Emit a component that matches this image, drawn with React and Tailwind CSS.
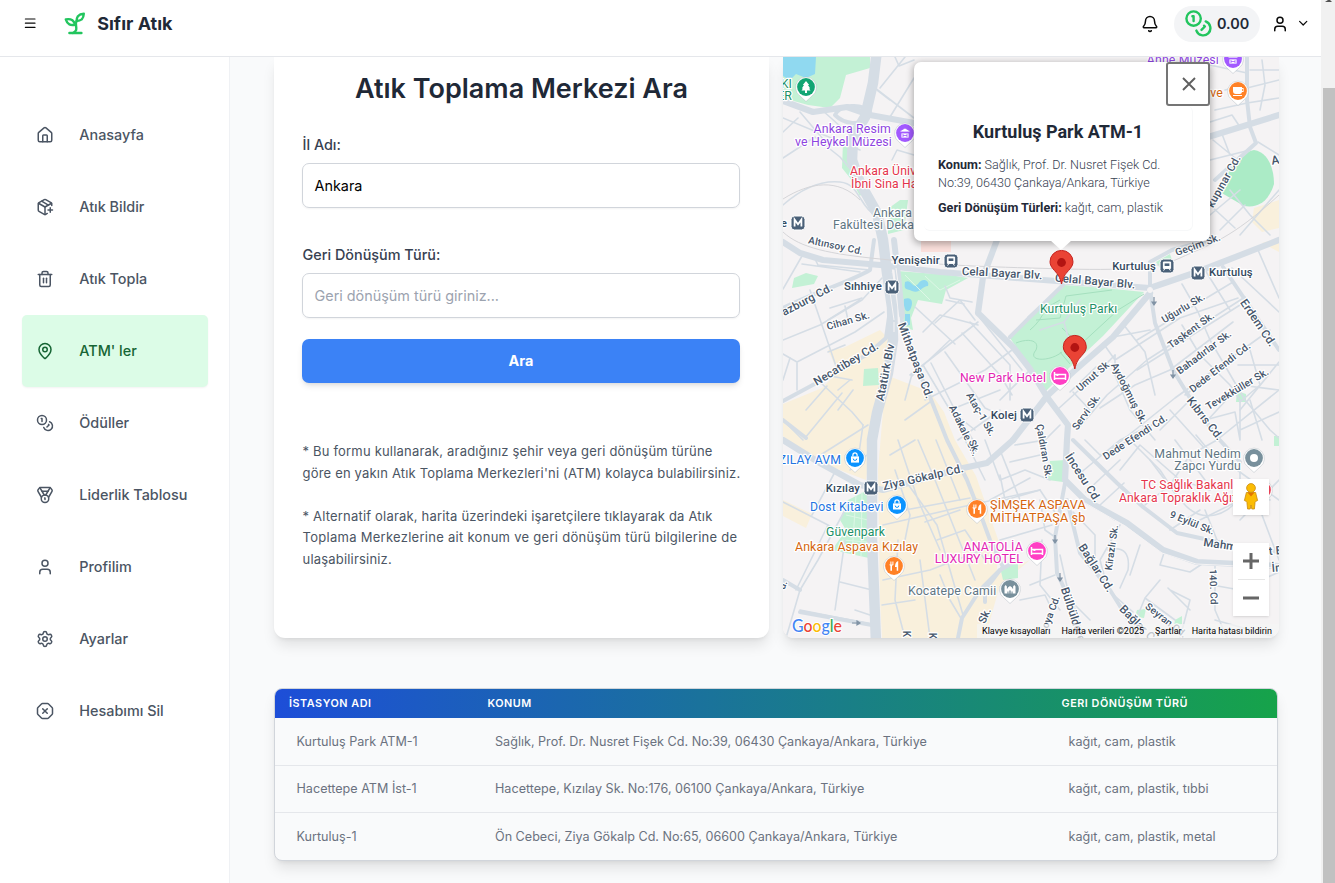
import React from "react";
import {
  Bell,
  ChevronDown,
  House,
  MapPin,
  Medal,
  Menu,
  OctagonX,
  PackagePlus,
  Settings,
  Trash2,
  User,
} from "lucide-react";

function Coins({ className }) {
  return (
    <svg viewBox="0 0 24 24" fill="none" stroke="currentColor" strokeWidth="2" strokeLinecap="round" strokeLinejoin="round" className={className}>
      <circle cx="8" cy="8" r="6" />
      <path d="M18.09 10.37A6 6 0 1 1 10.34 18" />
      <path d="M7 6h1v4" />
      <path d="m16.71 13.88.7.71-2.82 2.82" />
    </svg>
  );
}

function Sprout({ className }) {
  return (
    <svg viewBox="0 0 24 24" fill="none" stroke="currentColor" strokeWidth="2" strokeLinecap="round" strokeLinejoin="round" className={className}>
      <path d="M7 20h10" />
      <path d="M10 20c5.5-2.5.8-6.4 3-10" />
      <path d="M9.5 9.4c1.1.8 1.8 2.2 2.3 3.7-2 .4-3.5.4-4.8-.3-1.2-.6-2.3-1.9-3-4.2 2.8-.5 4.4 0 5.5.8z" />
      <path d="M14.1 6a7 7 0 0 0-1.1 4c1.9-.1 3.3-.6 4.3-1.4 1-1 1.6-2.3 1.7-4.6-2.7.1-4 1-4.9 2z" />
    </svg>
  );
}

const navItems = [
  { label: "Anasayfa", icon: House },
  { label: "Atık Bildir", icon: PackagePlus },
  { label: "Atık Topla", icon: Trash2 },
  { label: "ATM' ler", icon: MapPin, active: true },
  { label: "Ödüller", icon: Coins },
  { label: "Liderlik Tablosu", icon: Medal },
  { label: "Profilim", icon: User },
  { label: "Ayarlar", icon: Settings },
  { label: "Hesabımı Sil", icon: OctagonX },
];

const stations = [
  ["Kurtuluş Park ATM-1", "Sağlık, Prof. Dr. Nusret Fişek Cd. No:39, 06430 Çankaya/Ankara, Türkiye", "kağıt, cam, plastik"],
  ["Hacettepe ATM İst-1", "Hacettepe, Kızılay Sk. No:176, 06100 Çankaya/Ankara, Türkiye", "kağıt, cam, plastik, tıbbi"],
  ["Kurtuluş-1", "Ön Cebeci, Ziya Gökalp Cd. No:65, 06600 Çankaya/Ankara, Türkiye", "kağıt, cam, plastik, metal"],
];

const commercial = [
  "M843 348 L880 330 890 340 884 373 872 440 866 480 850 474 820 462 806 458 783 436 783 404 822 388 838 372 828 350Z",
  "M783 500 L812 514 806 528 783 516Z",
  "M886 375 L930 392 944 412 955 440 976 476 1000 545 996 575 1030 560 1000 585 985 638 882 638 880 600 878 470Z",
  "M1254 208 L1279 200 1279 228 1262 232 1252 222Z",
  "M1262 243 L1279 238 1279 252Z",
];

const parks = [
  "M783 57 L870 57 870 68 846 75 840 98 830 108 808 105 783 98Z",
  "M843 142 L850 142 851 160 864 190 860 196 850 178 842 168Z",
  "M889 208 L900 200 908 200 904 230 888 234Z",
  "M794 278 L806 273 818 276 814 284 792 288Z",
  "M897 271 L950 275 968 278 946 290 942 304 918 300 911 318 913 330 905 328 900 300Z",
  "M864 369 L878 368 879 385 863 386Z",
  "M1010 338 L1064 285 1104 288 1144 292 1103 336 1070 367 1046 391Z",
  "M848 500 L868 490 869 558 832 550 846 530 840 520Z",
  "M1050 461 L1066 460 1063 482 1048 480Z",
  "M1000 567 L1018 563 1018 578 1003 580Z",
  "M1237 391 L1246 394 1246 402 1236 402Z",
  "M1156 262 L1170 254 1174 266 1160 268Z",
  "M1137 610 L1146 609 1144 618 1135 617Z",
  "M1175 620 L1182 616 1182 624 1174 626Z",
  "M1274 436 L1279 436 1279 446 1274 446Z",
];

const water = [
  "M783 57 L816 57 815 74 806 78 796 74 790 80 783 76Z",
  "M905 282 C912 278 912 290 918 284 C922 277 930 280 928 286 C922 286 920 294 912 291 C905 288 904 290 905 282Z",
  "M904 299 C912 296 914 302 910 310 C906 314 903 308 904 299Z",
  "M905 314 L910 314 910 325 905 326Z",
];

const minorRoads = [
  "M783 132 L798 118 M783 158 L815 137 840 157 851 170 M783 205 C800 190 820 180 840 182 S858 205 876 216",
  "M875 88 L914 118 M880 88 L905 57 M890 117 L914 78 M892 160 L897 150 914 155 M877 90 L890 100",
  "M783 289 L802 256 M802 264 L860 272 M814 257 L818 265 870 270",
  "M783 340 L820 325 862 300 882 278 M783 354 L797 362 855 332 884 312 M810 290 L838 372 M797 362 L797 390",
  "M783 380 L790 358 M828 352 L845 345 M820 382 L852 412 863 425 M827 386 L806 410 M830 376 L852 380 M805 438 L842 393 M822 454 L868 425 M850 470 L867 455",
  "M828 320 L860 300 M830 308 L862 298 M845 306 L848 320 M783 420 L803 440 M863 425 L858 460 M838 390 L850 380 M853 390 L838 410",
  "M915 307 L955 344 M935 323 L960 300 975 320 M923 332 L940 315 978 325 M946 300 L964 304 M945 286 L950 298 972 302",
  "M910 375 L978 322 M905 400 L912 374 M912 376 L950 340 M923 365 L950 410 975 430 M931 363 L960 420 973 440 M945 352 L985 408 1000 415",
  "M962 333 L1000 375 1012 395 M970 322 L1010 365 1010 400 M980 318 L1022 370 M1000 400 L1030 370 M925 400 L985 370 1012 350 M905 420 L930 402 M950 410 L1000 390 M958 440 L1000 410",
  "M918 440 L935 480 975 580 M905 480 L937 525 963 615 M936 440 L960 500 M965 440 L985 480 M898 440 L918 500 940 550 M883 525 L970 505 1040 490 M883 580 L930 570 995 545",
  "M915 440 L890 455 M898 540 L895 600 905 638 M920 560 L930 638 M937 540 L965 530 985 560 M940 575 L950 600 962 620 M882 605 L915 600 M905 510 L970 498 M925 522 L960 510 M895 470 L910 515 905 540",
  "M783 502 L828 525 842 535 M845 510 L818 560 800 590 786 638 M828 525 L796 590 M812 515 L836 470 M800 590 L783 580 M800 610 L876 625 M845 540 L835 610 M840 582 L872 590 M855 610 L870 615",
  "M1028 317 L1064 285 M1080 300 L1064 322 1070 345 M1064 322 L1040 330",
  "M1113 337 L1150 330 M1123 324 L1145 352 1155 395 M1103 343 L1115 360 M1137 340 L1233 282 M1115 360 L1180 318 1238 298 M1137 370 L1240 305 M1096 367 L1070 392 M1073 392 L1090 410 M1115 355 L1115 375 1130 410 1155 440",
  "M1057 410 L1090 380 1115 355 M1077 430 L1107 395 1147 360 1245 297 M1100 408 L1135 385 1170 370 1233 322 M1110 450 L1175 398 1270 330 M1185 395 L1235 357 M1182 325 L1200 355 1230 385 1240 400",
  "M1182 284 L1198 312 1210 340 1245 400 1270 430 1279 438 M1232 268 L1279 312 M1258 250 L1279 298 M1205 270 L1230 310 M1250 350 L1260 385 1240 402 M1279 362 L1240 410 M1238 365 L1279 365 M1205 423 L1240 385 1279 390",
  "M1205 420 L1235 412 1240 440 M1240 400 L1240 440 M1217 440 L1279 390 M1250 400 L1262 440 M1279 412 L1240 430 M1170 410 L1215 460 M1190 400 L1160 430",
  "M1085 440 L1100 455 1130 440 M1078 475 L1120 440 1152 425 M1086 492 L1120 460 M1100 505 L1124 483 M1120 470 L1140 445 1180 480 1210 490 M1130 440 L1160 470 C1180 500 1190 520 1215 515 S1240 480 1270 500",
  "M1145 505 L1170 485 1190 455 1217 440 M1150 460 L1180 500 M1175 440 L1205 480 M1220 440 L1240 470 1240 500 M1200 520 L1240 500 M1217 540 L1205 510 M1170 530 L1200 510",
  "M1120 525 L1100 560 1108 590 1133 612 M1140 545 L1130 575 M1108 550 C1125 545 1130 555 1128 570 L1120 588 M1165 550 L1160 565 1190 572 M1215 565 L1215 610 1227 638 M1190 572 L1205 562 M1212 585 L1240 590",
  "M1040 500 L1045 530 1055 537 M1040 490 L1060 520 M1000 540 L1052 525 M1030 585 L1055 575 M1020 600 L1045 595 1052 610 M1042 540 L1040 585 1060 610",
  "M1073 512 L1095 535 1095 560 M1060 555 L1070 600 1090 620 M1085 500 L1115 520 M1133 627 L1145 598 1175 620 M1168 588 L1190 610 M1145 598 L1160 580 M1215 620 L1279 638 M1170 590 L1190 600 1180 638",
  "M1210 65 L1247 73 M1215 110 L1247 103 1279 98 M1247 88 L1279 80 M1210 122 L1232 115 1240 127 M1225 90 L1247 85 M1262 60 L1265 85 1260 110 M1250 70 L1279 70",
  "M1210 160 L1250 150 M1213 140 L1240 162 M1222 134 L1230 155 M1258 142 L1279 155 M1230 190 L1250 215 1270 235 M1210 215 L1240 190 M1220 230 L1245 205 M1210 205 L1235 228 M1279 190 L1240 235",
  "M1000 450 L1020 500 M985 440 L1000 480 1025 470 1050 480 M1000 475 L1005 500 1040 490 M1010 462 L1040 455 M990 500 L1030 478 M1015 445 L1045 440 1060 425",
  "M1240 520 L1279 480 M1262 515 L1279 560 M1230 465 L1279 500 M1240 590 L1279 572 M1196 435 L1225 470",
  "M895 57 L899 66 914 60 M800 112 L828 145 M822 110 L850 135 M783 118 L860 150",
];

const mediumRoads = [
  "M806 438 L783 420 M783 401 L822 380 868 354 886 338 890 310",
  "M783 308 C815 292 850 282 870 270 L874 240",
  "M897 270 L902 320 905 340 930 397 947 440 967 480 980 513 990 540 1003 567",
  "M1010 337 L1030 317 1063 285",
  "M1150 290 L1155 323 1173 370 1190 398 1217 437 1240 462",
  "M1223 267 L1279 350",
  "M1067 500 L1080 553 1110 590 1133 627 1138 638",
  "M1247 57 L1247 100 1250 127 1256 143 1215 180",
  "M1065 483 L1055 537 1057 573 1073 607 1083 638",
  "M1073 440 L1117 483 1143 507 1177 533 1232 545 1279 552",
  "M783 580 L800 590 M800 612 L872 625",
  "M985 602 L985 590 1000 570 1018 560",
  "M958 638 L962 618 980 590 1000 570",
  "M1150 288 L1150 262 1172 250 1210 240",
  "M835 115 C840 104 862 103 870 112 M835 115 C845 125 860 125 866 118",
];

const majorRoads = [
  "M783 101 L813 112 847 107 870 115 914 123",
  "M783 242 L800 253 823 260 880 265 940 272 980 275 1030 279 1097 284 1150 288 1197 272 1279 240",
  "M997 240 L983 277 978 313 1013 347 1030 369 1047 397 1068 425 1067 440 1065 480 1085 500 1127 523 1163 550 1197 562 1279 566",
  "M1013 440 L1047 396 1073 372 1113 337 1150 293",
  "M1013 440 L987 463 963 468 883 490 860 485 820 463 783 440",
  "M1205 138 L1279 115",
];

const labelTones = {
  road: "#46566b",
  transit: "#34495e",
  place: "#5f7683",
  purple: "#8e44e0",
  red: "#e5344b",
  green: "#219067",
  pink: "#e326b4",
  orange: "#d5650e",
  blue: "#2374e1",
};

// text, x, y, size, tone, anchor, rotation
const mapLabels = [
  ["KI", 792, 88, 12.3, "green", "end"],
  ["ER", 792, 100, 12.3, "green", "end"],
  ["Ankara Resim", 891, 133, 12.3, "purple", "end"],
  ["ve Heykel Müzesi", 892, 146, 12.3, "purple", "end"],
  ["Anne Müzesi", 1219, 64, 12.3, "purple", "end"],
  ["ve", 1223, 97, 12.3, "orange", "end"],
  ["Ankara Üniv", 850, 175, 12.2, "red", "start"],
  ["İbni Sina Ha", 851, 188, 12.2, "red", "start"],
  ["Ankara", 873, 217, 12.2, "place", "start"],
  ["Fakültesi Deka", 833, 229, 12.2, "place", "start"],
  ["e", 787, 227, 11, "transit", "end"],
  ["Yenişehir", 940, 264, 11.4, "transit", "end"],
  ["Sıhhiye", 882, 290, 11.4, "transit", "end"],
  ["Kurtuluş", 1156, 270, 11.3, "transit", "end"],
  ["Kurtuluş", 1209, 276, 11.3, "transit", "start"],
  ["Kolej", 1017, 419, 11.5, "transit", "end"],
  ["Kızılay", 860, 492, 11.3, "transit", "end"],
  ["Kurtuluş Parkı", 1040, 313, 12.1, "green", "start"],
  ["New Park Hotel", 960, 382, 12.2, "pink", "start"],
  ["ZILAY AVM", 841, 464, 12.2, "blue", "end"],
  ["Dost Kitabevi", 810, 511, 12.2, "blue", "start"],
  ["Güvenpark", 826, 536, 12.2, "green", "start"],
  ["Ankara Aspava Kızılay", 795, 551, 12.3, "orange", "start"],
  ["ŞİMŞEK ASPAVA", 990, 509, 12.6, "orange", "start"],
  ["MİTHATPAŞA şb", 990, 522, 12.6, "orange", "start"],
  ["ANATOLİA", 1023, 551, 12.4, "pink", "end"],
  ["LUXURY HOTEL", 1023, 563, 12.4, "pink", "end"],
  ["Kocatepe Camii", 908, 595, 12.3, "place", "start"],
  ["Mahmut Nedim", 1241, 458, 12.3, "place", "end"],
  ["Zapcı Yurdu", 1241, 470, 12.3, "place", "end"],
  ["TC Sağlık Bakanlı", 1141, 489, 12.1, "red", "start"],
  ["Ankara Topraklık Ağız", 1119, 502, 12.1, "red", "start"],
  ["Altınsoy Cd.", 835, 249, 10, "road", "middle", 12],
  ["azburg Cd.", 809, 303, 11.3, "road", "middle", -28],
  ["Cihan Sk.", 849, 324, 10.2, "road", "middle", -16],
  ["Necatibey Cd.", 848, 367, 11.5, "road", "middle", -31],
  ["Atatürk Blv", 889, 373, 11.5, "road", "middle", -79],
  ["Mithatpaşa Cd.", 912, 362, 11.5, "road", "middle", 69],
  ["Adakale Sk.", 961, 432, 10.2, "road", "middle", 64],
  ["Ataç-1 Sk.", 978, 416, 10.2, "road", "middle", 60],
  ["Celal Bayar Blv.", 1002, 277, 11.4, "road", "middle", 3],
  ["Celal Bayar Blv.", 1095, 285, 11.4, "road", "middle", 5],
  ["Ziya Gökalp Cd.", 924, 481, 11.5, "road", "middle", -13],
  ["Geçim Sk.", 1199, 248, 10.2, "road", "middle", -20],
  ["kupınar Cd.", 1227, 183, 11, "road", "middle", -61],
  ["A", 1276, 164, 12, "road", "middle", -10],
  ["Uğurlu Sk.", 1185, 311, 10.2, "road", "middle", -31],
  ["Taşkent Sk.", 1193, 333, 10.2, "road", "middle", -36],
  ["Bahadırlar Sk.", 1206, 355, 10.2, "road", "middle", -37],
  ["Dede Efendi Cd.", 1222, 370, 10.2, "road", "middle", -38],
  ["Tevekküller Sk.", 1239, 392, 10.2, "road", "middle", -31],
  ["Dede Efendi Cd.", 1137, 440, 10.2, "road", "middle", -33],
  ["Umut Sk.", 1096, 378, 10.2, "road", "middle", -41],
  ["Servi Sk.", 1089, 414, 10.2, "road", "middle", -55],
  ["Aydoğmuş Sk.", 1126, 395, 10.2, "road", "middle", 63],
  ["Çaldıran Sk.", 1041, 452, 10, "road", "middle", 80],
  ["Erdem Cd.", 1255, 325, 11.5, "road", "middle", 56],
  ["Kıbrıs Cd.", 1202, 421, 11.5, "road", "middle", 52],
  ["İncesu Cd.", 1080, 480, 11.5, "road", "middle", 57],
  ["Bağlar Cd.", 1093, 570, 11.5, "road", "middle", 57],
  ["Bağlar Cd.", 1138, 629, 11.5, "road", "middle", 45],
  ["Bülbülderesi", 1071, 620, 11.5, "road", "middle", 72],
  ["Kirazlı Sk.", 1115, 548, 10, "road", "middle", -82],
  ["9 Eylül Sk.", 1191, 526, 10, "road", "middle", 22],
  ["Mahm", 1203, 546, 11.5, "road", "start", 8],
  ["t B", 1269, 555, 11.5, "road", "start", -5],
  ["İn", 1272, 572, 11.5, "road", "start", -5],
  ["140. Cd", 1210, 587, 10, "road", "middle", 88],
  ["Seyran Cd.", 1164, 623, 10, "road", "middle", 38],
  ["oya Cd.", 1054, 613, 10, "road", "middle", -69],
  ["Sk.", 988, 617, 11, "road", "middle", -65],
  ["Sk.", 971, 448, 10, "road", "middle", 70],
  ["K", 903, 634, 10, "road", "middle", 90],
  ["K", 929, 636, 10, "road", "middle", 90],
  ["d.", 786, 586, 10, "road", "middle", -70],
];

const poiTones = {
  purple: "#a259ff",
  orange: "#ff8126",
  pink: "#ff3fc4",
  blue: "#0b93ff",
  green: "#12a573",
  slate: "#78909c",
  red: "#f0445a",
};

const poiGlyphs = {
  museum: <path d="M-5-2 0-5 5-2v1H-5zM-4 0h8v5h-8zM-2 1v3M2 1v3M-2 2.5h4" fill="#fff" stroke="#a259ff" strokeWidth=".8" />,
  cup: <path d="M-5-4H4v1h1.6v4H4Q3.6 3 2 3h-4Q-5 3-5 0zM4-2v2h.8v-2zM-5 4H4v1h-9z" fill="#fff" fillRule="evenodd" />,
  bed: <path d="M-5.5-4v8M-5.5 2.5H5.5V4M5.5 2.5V-1.5H-5.5M-3.6-.8h2" fill="none" stroke="#fff" strokeWidth="1.5" />,
  bag: (
    <>
      <path d="M-4-1.6H4V4.6H-4z" fill="#fff" />
      <path d="M-2.1-1.4V-3a2.1 2.1 0 0 1 4.2 0v1.6" fill="none" stroke="#fff" strokeWidth="1.2" />
      <path d="M-1.8.6a1.8 1.8 0 0 0 3.6 0" fill="none" stroke="#0b93ff" strokeWidth="1" />
    </>
  ),
  tree: <path d="M0-6 3.2-2H2L4.2 1.4H3L4.5 3.6H1V6H-1V3.6h-3.5L-3 1.4h-1.2L-2-2h-1.2z" fill="#fff" />,
  fork: (
    <>
      <path d="M-4.6-4.6v3h1v-3h1v3h1v-3h1V-1L-2-.2V4.8h-1.6V-.2L-4.6-1z" fill="#fff" />
      <path d="M4.2 4.8H2.7V1H1Q1-4 4.2-5z" fill="#fff" />
    </>
  ),
  mosque: <path d="M-5.5 4.5v-7l1.2-1.6L-3.1-2.5V.2Q-2-2 0-3 2-2 3.1.2V-2.5L4.3-4.1l1.2 1.6v7H2.6V2.4H1.5v2.1h-.8V2a.7.7 0 0 0-1.4 0v2.5h-.8V2.4h-1.1v2.1z" fill="#fff" />,
  dot: <circle r="4" fill="#fff" />,
};

const pois = [
  [806, 87, "green", "tree"],
  [905, 133, "purple", "museum"],
  [1233, 59, "purple", "museum"],
  [1238, 91, "orange", "cup"],
  [1060, 376, "pink", "bed"],
  [855, 458, "blue", "bag"],
  [897, 505, "blue", "bag"],
  [977, 509, "orange", "fork"],
  [894, 566, "orange", "fork"],
  [1037, 551, "pink", "bed"],
  [1010, 589, "slate", "mosque"],
  [1254, 458, "slate", "dot"],
  [1262, 490, "red", "dot"],
];

const metroStops = [
  [798, 223],
  [892, 287],
  [1198, 273],
  [1027, 415],
  [871, 488],
];
const trainStops = [
  [951, 261],
  [1167, 266],
];

function CityMap() {
  return (
    <svg viewBox="783 57 496 581" className="block h-[581px] w-[496px] bg-[#f5f3f4] font-[Roboto,sans-serif]">
      <g fill="#f9f0dc">{commercial.map((d) => <path key={d} d={d} />)}</g>
      <path d="M921 241h30v11h-30z" fill="#fbe0dc" />
      <g fill="#c3f1d5">{parks.map((d) => <path key={d} d={d} />)}</g>
      <path d="M1220 192 C1222 180 1238 152 1254 150 C1268 152 1274 168 1274 184 C1268 204 1256 208 1244 206Z" fill="#abebc6" />
      <g fill="#90d9f0">{water.map((d) => <path key={d} d={d} />)}</g>
      <g fill="none" stroke="#a5e0bf" strokeWidth="1">
        <path d="M1016 343 C1028 338 1040 340 1036 350 C1026 362 1050 362 1062 352 M1036 320 L1060 318 1066 296 1112 290 M1062 328 L1080 345 1118 310 1144 294 M1060 352 L1070 364 M1030 330 Q1040 322 1046 308 L1060 300" />
        <path d="M905 275 L930 300 M925 276 L940 290 960 280 M850 505 L868 510 M846 515 L868 520 M842 540 L868 542 M856 495 L852 555 M862 492 L861 556" stroke="#ddf7e6" />
      </g>
      <g fill="none" stroke="#d5dde5" strokeLinejoin="round" strokeLinecap="round">
        <g strokeWidth="1.6">{minorRoads.map((d) => <path key={d} d={d} />)}</g>
        <g strokeWidth="4">{mediumRoads.map((d) => <path key={d} d={d} />)}</g>
        <g strokeWidth="6.2">{majorRoads.map((d) => <path key={d} d={d} />)}</g>
        <path d="M877 50 L873 83 865 117 853 137 852 160 860 183 877 213 883 240 887 273 892 307 893 340 888 373 877 413 872 440 872 540 876 642" strokeWidth="10.5" />
        <path d="M894 240 L898 275 902 315" strokeWidth="6" />
      </g>
      <g fill="none" stroke="#f5f3f4" strokeWidth="1">
        <path d="M889 285 L894 320 M896 268 L899 290 M1085 503 L1125 526 1162 553 1196 564 1279 568 M894 322 V332" />
        <circle cx="1150" cy="290" r="2.5" fill="#f5f3f4" />
      </g>
      <path d="M783 232 C800 248 830 254 880 259 S960 266 1030 268 S1150 272 1180 258 S1230 240 1279 195" fill="none" stroke="#d5d5d8" strokeWidth="1" />
      <path d="M783 199 C810 182 838 178 860 200" fill="none" stroke="#d5d5d8" strokeWidth="1" />
      <g stroke="#8193a5" fill="#8193a5" strokeWidth="1.2">
        <path d="M1154 297v8m-2-3 2 3 2-3zM1173 370v8m-2-3 2 3 2-3zM1055 535v8m-2-3 2 3 2-3zM1060 573v8m-2-3 2 3 2-3zM852 623h8m-3-2 3 2-3 2z" />
      </g>
      {mapLabels.map(([text, x, y, size, tone, anchor, angle], i) => (
        <text
          key={i}
          x={x}
          y={y}
          fontSize={size}
          fontWeight={tone === "road" || tone === "transit" ? 500 : 400}
          fill={labelTones[tone]}
          stroke="#fff"
          strokeWidth="2.4"
          strokeLinejoin="round"
          paintOrder="stroke"
          textAnchor={anchor}
          letterSpacing=".15"
          transform={angle ? `rotate(${angle} ${x} ${y})` : undefined}
        >
          {text}
        </text>
      ))}
      {metroStops.map(([x, y]) => (
        <g key={x} transform={`translate(${x} ${y})`}>
          <rect x="-7" y="-7" width="14" height="14" rx="3.5" fill="#4a6078" stroke="#fff" strokeWidth="1" />
          <path d="M-3.4 3.6v-7L0 1.2l3.4-4.6v7" fill="none" stroke="#fff" strokeWidth="1.8" />
        </g>
      ))}
      {trainStops.map(([x, y]) => (
        <g key={x} transform={`translate(${x} ${y})`}>
          <rect x="-7" y="-7" width="14" height="14" rx="3.5" fill="#4a6078" stroke="#fff" strokeWidth="1" />
          <path d="M-3.6-4h7.2v6.4h-7.2zM-2 2.4-3.4 4.6M2 2.4 3.4 4.6" fill="#fff" stroke="#fff" />
          <path d="M-2.4-2.6h4.8V0h-4.8z" fill="#4a6078" />
        </g>
      ))}
      {pois.map(([x, y, tone, glyph]) => (
        <g key={`${x}-${y}`} transform={`translate(${x} ${y})`}>
          <path d="M0 14.5 C-2 12.5-4 11-6 9A10.4 10.4 0 1 1 6 9C4 11 2 12.5 0 14.5Z" fill="#fff" stroke="#9aa5ae" strokeOpacity=".5" strokeWidth=".7" />
          <circle r="8.9" fill={poiTones[tone]} />
          {poiGlyphs[glyph]}
        </g>
      ))}
      <g fontSize="17.5" fontWeight="500" stroke="#fff" strokeWidth="2" paintOrder="stroke" fontFamily="Lato, sans-serif">
        <text x="792" y="632" textLength="50" lengthAdjust="spacingAndGlyphs">
          <tspan fill="#4285f4">G</tspan>
          <tspan fill="#ea4335">o</tspan>
          <tspan fill="#fbbc04">o</tspan>
          <tspan fill="#4285f4">g</tspan>
          <tspan fill="#34a853">l</tspan>
          <tspan fill="#ea4335">e</tspan>
        </text>
      </g>
      {[
        [1061.5, 284],
        [1074.8, 369],
      ].map(([x, y]) => (
        <g key={x} transform={`translate(${x} ${y})`}>
          <path d="M0 0C-1.6-7-3.4-9.5-7-13.4C-10-16.8-11.5-19-11.5-22.3A11.5 11.3 0 0 1 11.5-22.3C11.5-19 10-16.8 7-13.4C3.4-9.5 1.6-7 0 0Z" fill="#ea4335" stroke="#c5221f" strokeWidth="1" />
          <circle cy="-21.5" r="4.4" fill="#b31412" />
        </g>
      ))}
    </svg>
  );
}

function Pegman() {
  return (
    <svg viewBox="0 0 16 28" className="h-[28px] w-[16px]">
      <path d="M3.4 9.5h9.2l2 8-1.8.8-.7 1L11.4 26H8.8l-.8-4-.8 4H4.6l-.7-6.7-.7-1-1.8-.8z" fill="#fbbc04" stroke="#c98a12" strokeWidth=".8" />
      <path d="M4.5 9.4 8 13.4l3.5-4z" fill="#e37400" />
      <circle cx="8" cy="5" r="4.4" fill="#fbbc04" stroke="#c98a12" strokeWidth=".8" />
    </svg>
  );
}

function MapPanel() {
  return (
    <section className="relative h-[581px] w-[496px] overflow-hidden rounded-b-[11px]">
      <CityMap />

      <div className="absolute right-[10px] bottom-[123px] flex h-9 w-9 items-center justify-center bg-white shadow">
        <Pegman />
      </div>
      <div className="absolute right-[10px] bottom-[22px] flex h-[73px] w-9 flex-col items-center bg-white shadow">
        <div className="flex h-9 items-center">
          <svg viewBox="0 0 16 16" className="h-4 w-4"><path d="M6.5 0h3v6.5H16v3H9.5V16h-3V9.5H0v-3h6.5z" fill="#666" /></svg>
        </div>
        <div className="h-px w-[27px] bg-[#e6e6e6]" />
        <div className="flex h-9 items-center">
          <svg viewBox="0 0 16 16" className="h-4 w-4"><path d="M0 6.5h16v3H0z" fill="#666" /></svg>
        </div>
      </div>
      <div className="absolute right-0 bottom-0 flex h-[14px] items-center whitespace-nowrap font-[Roboto,sans-serif] text-[9px] leading-[14px] text-black">
        <span className="bg-[#f5f5f5]/70 px-[5px]">Klavye kısayolları</span>
        <span className="bg-[#f5f5f5]/70 pl-[6px]">Harita verileri ©2025</span>
        <span className="bg-[#f5f5f5]/70 pr-[10px] pl-[11px]">Şartlar</span>
        <span className="bg-[#f5f5f5]/70 pr-[7px]">Harita hatası bildirin</span>
      </div>

      <div className="absolute top-[5px] left-[131px] h-[179px] w-[296px] rounded-[7px] bg-white font-[Roboto,sans-serif] shadow-[0_2px_7px_1px_rgba(0,0,0,0.3)]">
        <div className="flex justify-end">
          <button className="flex h-[44px] w-[44px] items-center justify-center rounded-[3px] border-2 border-[#757575] pl-px">
            <svg viewBox="0 0 14 14" className="h-[14px] w-[14px]"><path d="m1 1 12 12M13 1 1 13" stroke="#5f5f5f" strokeWidth="1.9" /></svg>
          </button>
        </div>
        <div className="mr-[17px] ml-[10px] h-[125px] rounded-[6px] border-r border-b border-[#f7f8f9] px-[14px] pt-[13px]">
          <h3 className="text-center text-[18px] leading-[25px] font-bold text-[#1f2937]">Kurtuluş Park ATM-1</h3>
          <p className="mt-[12px] w-[240px] text-[12.6px] leading-[18px] font-light text-[#374151]">
            <b className="font-bold text-[#1f2937]">Konum:</b> Sağlık, Prof. Dr. Nusret Fişek Cd. No:39, 06430 Çankaya/Ankara, Türkiye
          </p>
          <p className="mt-[7px] whitespace-nowrap text-[12.6px] leading-[18px] font-light text-[#374151]">
            <b className="font-bold text-[#1f2937]">Geri Dönüşüm Türleri:</b> kağıt, cam, plastik
          </p>
        </div>
      </div>
      <svg viewBox="0 0 22 11" className="absolute top-[183px] left-[267px] h-[11px] w-[22px]"><path d="M0 0h22L11 10z" fill="#fff" /></svg>
    </section>
  );
}

function SearchCard() {
  return (
    <section className="flex h-[581px] w-[495px] flex-col rounded-b-[11px] bg-white px-[28px] shadow-[0_9px_13.5px_-2.7px_rgba(0,0,0,0.1),0_3.6px_5.4px_-3.6px_rgba(0,0,0,0.1)]">
      <h1 className="mt-[16px] text-center text-[27px] leading-[32px] font-semibold text-[#1f2937]">Atık Toplama Merkezi Ara</h1>
      <label className="mt-[29px] pl-[0.5px] text-[14.4px] leading-[22px] font-medium text-[#374151]">İl Adı:</label>
      <div className="mt-[7px] flex h-[45px] w-[438px] items-center rounded-[7px] border border-[#d1d5db] px-[11.5px] text-[14.4px] text-black shadow-xs">Ankara</div>
      <label className="mt-[36px] pl-[0.5px] text-[14.4px] leading-[22px] font-medium text-[#374151]">Geri Dönüşüm Türü:</label>
      <div className="mt-[7px] flex h-[45px] w-[438px] items-center rounded-[7px] border border-[#d1d5db] px-[11.5px] text-[14.4px] text-[#9ca3af] shadow-xs">Geri dönüşüm türü giriniz...</div>
      <button className="mt-[21px] h-[44px] w-[438px] rounded-[7px] bg-[#3b82f6] text-[14.4px] font-bold text-white shadow-md">Ara</button>
      <div className="mt-[58px] flex flex-col gap-[21.6px] pl-[0.5px] text-[13px] leading-[21.6px] tracking-[0.19px] whitespace-nowrap text-[#4b5563]">
        <p>
          * Bu formu kullanarak, aradığınız şehir veya geri dönüşüm türüne
          <br />
          göre en yakın Atık Toplama Merkezleri'ni (ATM) kolayca bulabilirsiniz.
        </p>
        <p>
          * Alternatif olarak, harita üzerindeki işaretçilere tıklayarak da Atık
          <br />
          <span className="tracking-[0.28px]">Toplama Merkezlerine ait konum ve geri dönüşüm türü bilgilerine de</span>
          <br />
          ulaşabilirsiniz.
        </p>
      </div>
    </section>
  );
}

function StationTable() {
  return (
    <section className="mt-[50px] h-[173px] w-[1004px] overflow-hidden rounded-[8px] border border-[#d1d5db] bg-[#f9fafb] shadow-[0_9px_13.5px_-2.7px_rgba(0,0,0,0.1),0_3.6px_5.4px_-3.6px_rgba(0,0,0,0.1)]">
      <div className="grid h-[29px] grid-cols-[198.5px_574px_1fr] items-center bg-linear-to-r/srgb from-[#1d4ed8] to-[#16a34a] pt-px pl-[14px] text-[10.8px] font-semibold tracking-[0.54px] text-white">
        <span>İSTASYON ADI</span>
        <span>KONUM</span>
        <span>GERI DÖNÜŞÜM TÜRÜ</span>
      </div>
      {stations.map(([name, place, types], i) => (
        <div
          key={name}
          className={`grid grid-cols-[198.5px_573.5px_1fr] items-center pt-px pl-[21.5px] text-[12.6px] text-[#6b7280] ${i < 2 ? "border-b border-[#e5e7eb]" : ""} ${i === 1 ? "h-[47px]" : "h-[48px]"}`}
        >
          <span>{name}</span>
          <span>{place}</span>
          <span>{types}</span>
        </div>
      ))}
    </section>
  );
}

export default function App() {
  return (
    <div className="flex h-[883px] w-[1335px] overflow-hidden bg-[#f9fafb] font-[Inter,sans-serif]">
      <div className="flex w-[1321px] flex-col">
        <header className="flex h-[57px] shrink-0 items-center border-b border-[#e5e7eb] bg-white pb-[9px]">
          <Menu className="ml-[23px] h-[14.4px] w-[14.4px] text-[#0a0a0a]" />
          <Sprout className="ml-[24px] h-[28.8px] w-[28.8px] text-[#22c55e]" />
          <span className="ml-[7px] text-[18px] font-bold text-[#1f2937]">Sıfır Atık</span>
          <div className="ml-auto flex items-center">
            <Bell className="h-[18px] w-[18px] text-[#0a0a0a]" />
            <div className="ml-[15px] flex h-[36px] w-[86px] items-center rounded-full bg-[#f3f4f6] pl-[10px]">
              <Coins className="h-[28.8px] w-[28.8px] text-[#22c55e]" />
              <span className="ml-[4.5px] text-[14.4px] font-semibold text-[#1f2937]">0.00</span>
            </div>
            <User className="ml-[11px] h-[18px] w-[18px] text-[#0a0a0a]" />
            <ChevronDown className="mr-[11px] ml-[7px] h-[14.4px] w-[14.4px] text-[#0a0a0a]" />
          </div>
        </header>

        <div className="flex min-h-0 flex-1">
          <aside className="w-[230px] shrink-0 border-r border-[#eff1f4] bg-white px-[22px] pt-[42px]">
            {navItems.map(({ label, icon: Icon, active }) => (
              <div
                key={label}
                className={`flex h-[72px] w-[186px] items-center rounded-[5px] pl-[14px] text-[14.4px] font-medium ${active ? "bg-[#dcfce7] text-[#166534] shadow-xs" : "text-[#4b5563]"}`}
              >
                <Icon className="h-[18px] w-[18px]" />
                <span className="ml-[25.3px]">{label}</span>
              </div>
            ))}
          </aside>
          <main className="flex-1 overflow-hidden pl-[44px]">
            <div className="flex gap-[14px]">
              <SearchCard />
              <div className="rounded-b-[11px] shadow-[0_9px_13.5px_-2.7px_rgba(0,0,0,0.1),0_3.6px_5.4px_-3.6px_rgba(0,0,0,0.1)]">
                <MapPanel />
              </div>
            </div>
            <StationTable />
          </main>
        </div>
      </div>
      <div className="flex w-[14px] flex-col bg-[#f1f1f1] pl-[2px]">
        <svg viewBox="0 0 12 88" className="h-[88px] w-[12px] shrink-0"><path d="M2 2 5 0h2l2 2z" fill="#505050" /></svg>
        <div className="flex-1 bg-[#c1c1c1]" />
      </div>
    </div>
  );
}
